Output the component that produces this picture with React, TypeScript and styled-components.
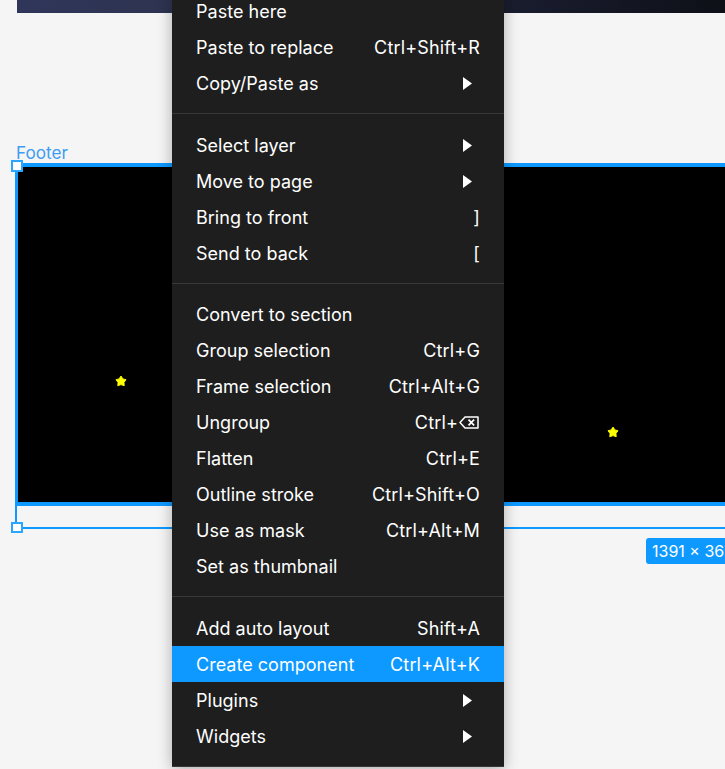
import React from "react";
import styled, { createGlobalStyle } from "styled-components";

const GlobalStyle = createGlobalStyle`
  html, body {
    margin: 0;
    padding: 0;
    background: #f5f5f5;
    overflow: hidden;
  }
`;

const Canvas = styled.div`
  position: relative;
  display: flex;
  flex-direction: column;
  align-items: flex-start;
  width: 725px;
  height: 769px;
  overflow: hidden;
  background: #f5f5f5;
  font-family: Inter, "Liberation Sans", sans-serif;
`;

const HeroFrame = styled.div`
  align-self: stretch;
  flex: none;
  margin-left: 17px;
  height: 13px;
  background: linear-gradient(90deg, #30365a 0%, #2e3350 22%, #1a1d2f 69%, #0e1018 100%);
`;

const FrameLabel = styled.span`
  margin: 130px 0 0 16px;
  font-size: 17.2px;
  line-height: 20px;
  color: #3d9df2;
`;

const SelectionBox = styled.div`
  position: relative;
  flex: none;
  margin-left: 15px;
  width: 760px;
  padding-bottom: 21px;
  border: solid #0d99ff;
  border-width: 0 0 2px 2px;
`;

const FooterFrame = styled.div`
  position: relative;
  margin-left: -2px;
  height: 335px;
  background: #000;
  border: solid #0d99ff;
  border-width: 4px 3px;
`;

const Handle = styled.div<{ $top: number }>`
  position: absolute;
  left: -6px;
  top: ${({ $top }) => $top}px;
  width: 7.5px;
  height: 7.5px;
  background: #fff;
  border: 2px solid #2ba6ff;
`;

const Star = styled.svg<{ $left: number; $top: number }>`
  position: absolute;
  left: ${({ $left }) => $left}px;
  top: ${({ $top }) => $top}px;
  width: 12px;
  height: 12px;
`;

const SizeBadge = styled.div`
  flex: none;
  margin: 9px 0 0 646px;
  height: 26px;
  padding: 0 6px;
  display: flex;
  align-items: center;
  white-space: nowrap;
  border-radius: 3px;
  background: #0d99ff;
  color: #fff;
  font-size: 16px;
`;

const Menu = styled.div`
  position: absolute;
  left: 172px;
  top: -7px;
  width: 332px;
  background: #1e1e1e;
  box-shadow: 0 2px 14px rgba(0, 0, 0, 0.3);
  color: #fff;
`;

const Group = styled.div`
  padding: 13px 0 12px;
  border-bottom: 1px solid #383838;

  &:first-child {
    padding-top: 0;
  }

  &:nth-child(3) {
    padding-top: 12px;
  }
`;

const Row = styled.div<{ $active?: boolean }>`
  display: flex;
  align-items: center;
  justify-content: space-between;
  height: 36px;
  padding: 0 24px;
  font-size: 18px;
  letter-spacing: 0.02px;
  white-space: nowrap;
  background: ${({ $active }) => ($active ? "#0d99ff" : "transparent")};
`;

const Shortcut = styled.span`
  display: inline-flex;
  align-items: center;
  gap: 1px;
  letter-spacing: 0.16px;
`;

const Arrow = styled.svg`
  width: 9px;
  height: 13px;
  margin-right: 8px;
`;

const BackspaceIcon = styled.svg`
  width: 20px;
  height: 13px;
  margin-right: 1px;
`;

type Item = { label: string; shortcut?: string; submenu?: boolean; backspace?: boolean; active?: boolean };

const groups: Item[][] = [
  [
    { label: "Paste here" },
    { label: "Paste to replace", shortcut: "Ctrl+Shift+R" },
    { label: "Copy/Paste as", submenu: true },
  ],
  [
    { label: "Select layer", submenu: true },
    { label: "Move to page", submenu: true },
    { label: "Bring to front", shortcut: "]" },
    { label: "Send to back", shortcut: "[" },
  ],
  [
    { label: "Convert to section" },
    { label: "Group selection", shortcut: "Ctrl+G" },
    { label: "Frame selection", shortcut: "Ctrl+Alt+G" },
    { label: "Ungroup", shortcut: "Ctrl+", backspace: true },
    { label: "Flatten", shortcut: "Ctrl+E" },
    { label: "Outline stroke", shortcut: "Ctrl+Shift+O" },
    { label: "Use as mask", shortcut: "Ctrl+Alt+M" },
    { label: "Set as thumbnail" },
  ],
  [
    { label: "Add auto layout", shortcut: "Shift+A" },
    { label: "Create component", shortcut: "Ctrl+Alt+K", active: true },
    { label: "Plugins", submenu: true },
    { label: "Widgets", submenu: true },
  ],
];

const StarGlyph: React.FC<{ left: number; top: number }> = ({ left, top }) => (
  <Star $left={left} $top={top} viewBox="0 0 12 12">
    <polygon
      points="6,1 7.9,3.9 11,4.7 9,7.4 9.2,10.8 6,9.6 2.8,10.8 3,7.4 1,4.7 4.1,3.9"
      fill="#ffff00"
      stroke="#ffff00"
      strokeWidth="0.9"
      strokeLinejoin="round"
    />
  </Star>
);

const MenuRow: React.FC<{ item: Item }> = ({ item }) => (
  <Row $active={item.active}>
    <span>{item.label}</span>
    {item.shortcut && (
      <Shortcut>
        {item.shortcut}
        {item.backspace && (
          <BackspaceIcon viewBox="0 0 20 13">
            <path d="M6 1h13v11H6L1 6.5z" fill="none" stroke="#fff" strokeWidth="1.5" strokeLinejoin="round" />
            <path d="M9.5 3.7l5.6 5.6M15.1 3.7l-5.6 5.6" stroke="#fff" strokeWidth="1.7" />
          </BackspaceIcon>
        )}
      </Shortcut>
    )}
    {item.submenu && (
      <Arrow viewBox="0 0 9 13">
        <polygon points="0,0 9,6.5 0,13" fill="#fff" />
      </Arrow>
    )}
  </Row>
);

export default function App() {
  return (
    <Canvas>
      <GlobalStyle />
      <HeroFrame />
      <FrameLabel>Footer</FrameLabel>
      <SelectionBox>
        <FooterFrame>
          <StarGlyph left={97} top={208} />
          <StarGlyph left={589} top={259} />
        </FooterFrame>
        <Handle $top={-3} />
        <Handle $top={358.5} />
      </SelectionBox>
      <SizeBadge>1391 × 362</SizeBadge>
      <Menu>
        {groups.map((group, i) => (
          <Group key={i}>
            {group.map((item) => (
              <MenuRow key={item.label} item={item} />
            ))}
          </Group>
        ))}
      </Menu>
    </Canvas>
  );
}
